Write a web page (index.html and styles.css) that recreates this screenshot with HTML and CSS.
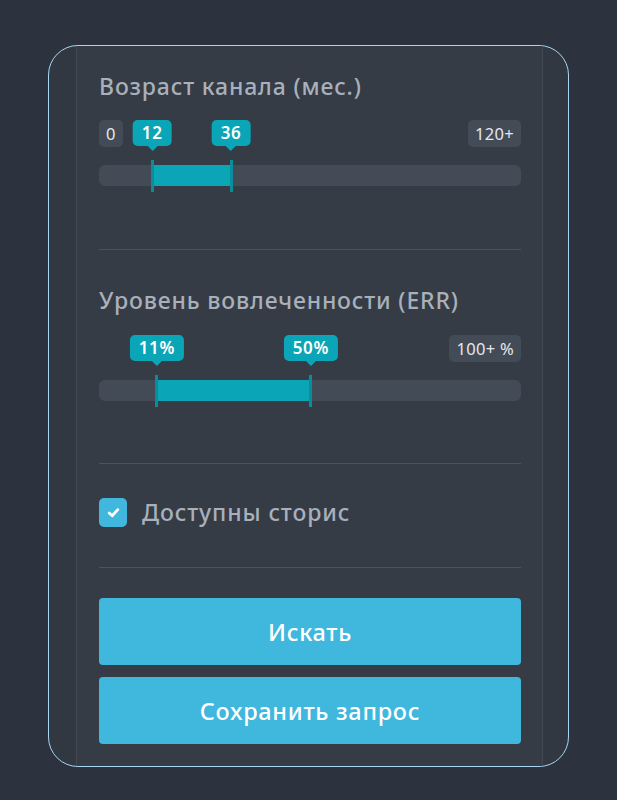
FILE: index.html
```html
<!DOCTYPE html>
<html lang="ru">
<head>
<meta charset="utf-8">
<title>Фильтры</title>
<link rel="stylesheet" href="styles.css">
</head>
<body>
<div class="frame">
  <div class="column">
    <section class="section">
      <h3 class="title">Возраст канала (мес.)</h3>
      <div class="slider">
        <div class="labels">
          <span class="edge">0</span>
          <span class="edge">120+</span>
        </div>
        <div class="track">
          <div class="fill" style="left:12.6%;width:18.7%"></div>
          <span class="handle" style="left:12.6%"></span>
          <span class="handle" style="left:31.3%"></span>
        </div>
        <span class="bubble" style="left:12.6%">12</span>
        <span class="bubble" style="left:31.3%">36</span>
      </div>
    </section>
    <hr class="divider">
    <section class="section second">
      <h3 class="title">Уровень вовлеченности (ERR)</h3>
      <div class="slider">
        <div class="labels">
          <span class="edge spacer"></span>
          <span class="edge">100+ %</span>
        </div>
        <div class="track">
          <div class="fill" style="left:13.7%;width:36.5%"></div>
          <span class="handle" style="left:13.7%"></span>
          <span class="handle" style="left:50.2%"></span>
        </div>
        <span class="bubble" style="left:13.7%">11%</span>
        <span class="bubble" style="left:50.2%">50%</span>
      </div>
    </section>
    <hr class="divider before-check">
    <label class="check">
      <span class="box">
        <svg width="15" height="15" viewBox="0 0 14 14"><path d="M3 7.5 L5.8 10 L11 4.3" fill="none" stroke="#fff" stroke-width="2.6" stroke-linecap="round" stroke-linejoin="round"/></svg>
      </span>
      <span class="check-text">Доступны сторис</span>
    </label>
    <hr class="divider after-check">
    <div class="actions">
      <button class="btn">Искать</button>
      <button class="btn">Сохранить запрос</button>
    </div>
  </div>
</div>
</body>
</html>
```
FILE: styles.css
```css
* { box-sizing: border-box; }
html, body { margin: 0; padding: 0; }
body {
  background: #2d333e;
  font-family: "Noto Sans", "Open Sans", sans-serif;
  width: 617px;
  height: 800px;
  overflow: hidden;
}
.frame {
  margin: 45px 0 0 48px;
  width: 521px;
  height: 722px;
  border: 1.5px solid #a9d6f2;
  border-radius: 30px;
  background: #313842;
  overflow: hidden;
  padding: 0 25px 0 27px;
}
.column {
  height: 100%;
  background: #353c46;
  border-left: 1px solid #434a54;
  border-right: 1px solid #434a54;
  padding: 26px 21px 0 22px;
}
.section { margin: 0; }
.title {
  margin: 0;
  font-size: 23px;
  line-height: 28px;
  font-weight: 500;
  color: #a8b0bb;
  letter-spacing: 0.85px;
}
.slider {
  position: relative;
  margin-top: 20px;
}
.labels {
  display: flex;
  justify-content: space-between;
  height: 27px;
}
.edge {
  background: #434b56;
  color: #e4e8ec;
  border-radius: 5px;
  font-size: 16.5px;
  line-height: 27px;
  padding: 0 7px;
  min-width: 21px;
  text-align: center;
  letter-spacing: 0.3px;
}
.spacer { visibility: hidden; }
.track {
  position: relative;
  margin-top: 18px;
  height: 21px;
  border-radius: 6px;
  background: #434b56;
}
.fill {
  position: absolute;
  top: 0;
  bottom: 0;
  background: #0aa5b6;
}
.handle {
  position: absolute;
  top: -5px;
  bottom: -6px;
  width: 3px;
  margin-left: -1.5px;
  background: #0b8c9b;
}
.bubble {
  position: absolute;
  top: 0;
  transform: translateX(-50%);
  background: #0aa5b6;
  color: #fff;
  font-size: 17px;
  font-weight: 600;
  line-height: 26px;
  height: 26px;
  padding: 0 9px;
  border-radius: 5px;
  letter-spacing: 0.6px;
}
.bubble::after {
  content: "";
  position: absolute;
  left: 50%;
  top: 100%;
  margin-left: -5px;
  border: 5px solid transparent;
  border-top-color: #0aa5b6;
  border-bottom: 0;
}
.divider {
  margin: 63px 0 36px;
  border: 0;
  border-top: 1px solid #4b535e;
  height: 0;
}
.second .slider { margin-top: 21px; }
.before-check { margin: 62px 0 34px; }
.after-check { margin: 40px 0 30px; }
.check {
  display: flex;
  align-items: center;
  gap: 15px;
}
.box {
  width: 28px;
  height: 29px;
  border-radius: 5px;
  background: #42b7dd;
  display: flex;
  align-items: center;
  justify-content: center;
}
.check-text {
  font-size: 23px;
  line-height: 29px;
  font-weight: 500;
  color: #a8b0bb;
  letter-spacing: 0.9px;
}
.actions {
  display: flex;
  flex-direction: column;
  gap: 12px;
}
.btn {
  height: 67px;
  border: 0;
  border-radius: 4px;
  background: #40b7dd;
  color: #fff;
  font-family: inherit;
  font-size: 23.5px;
  font-weight: 500;
  letter-spacing: 0.7px;
  cursor: pointer;
}
```
